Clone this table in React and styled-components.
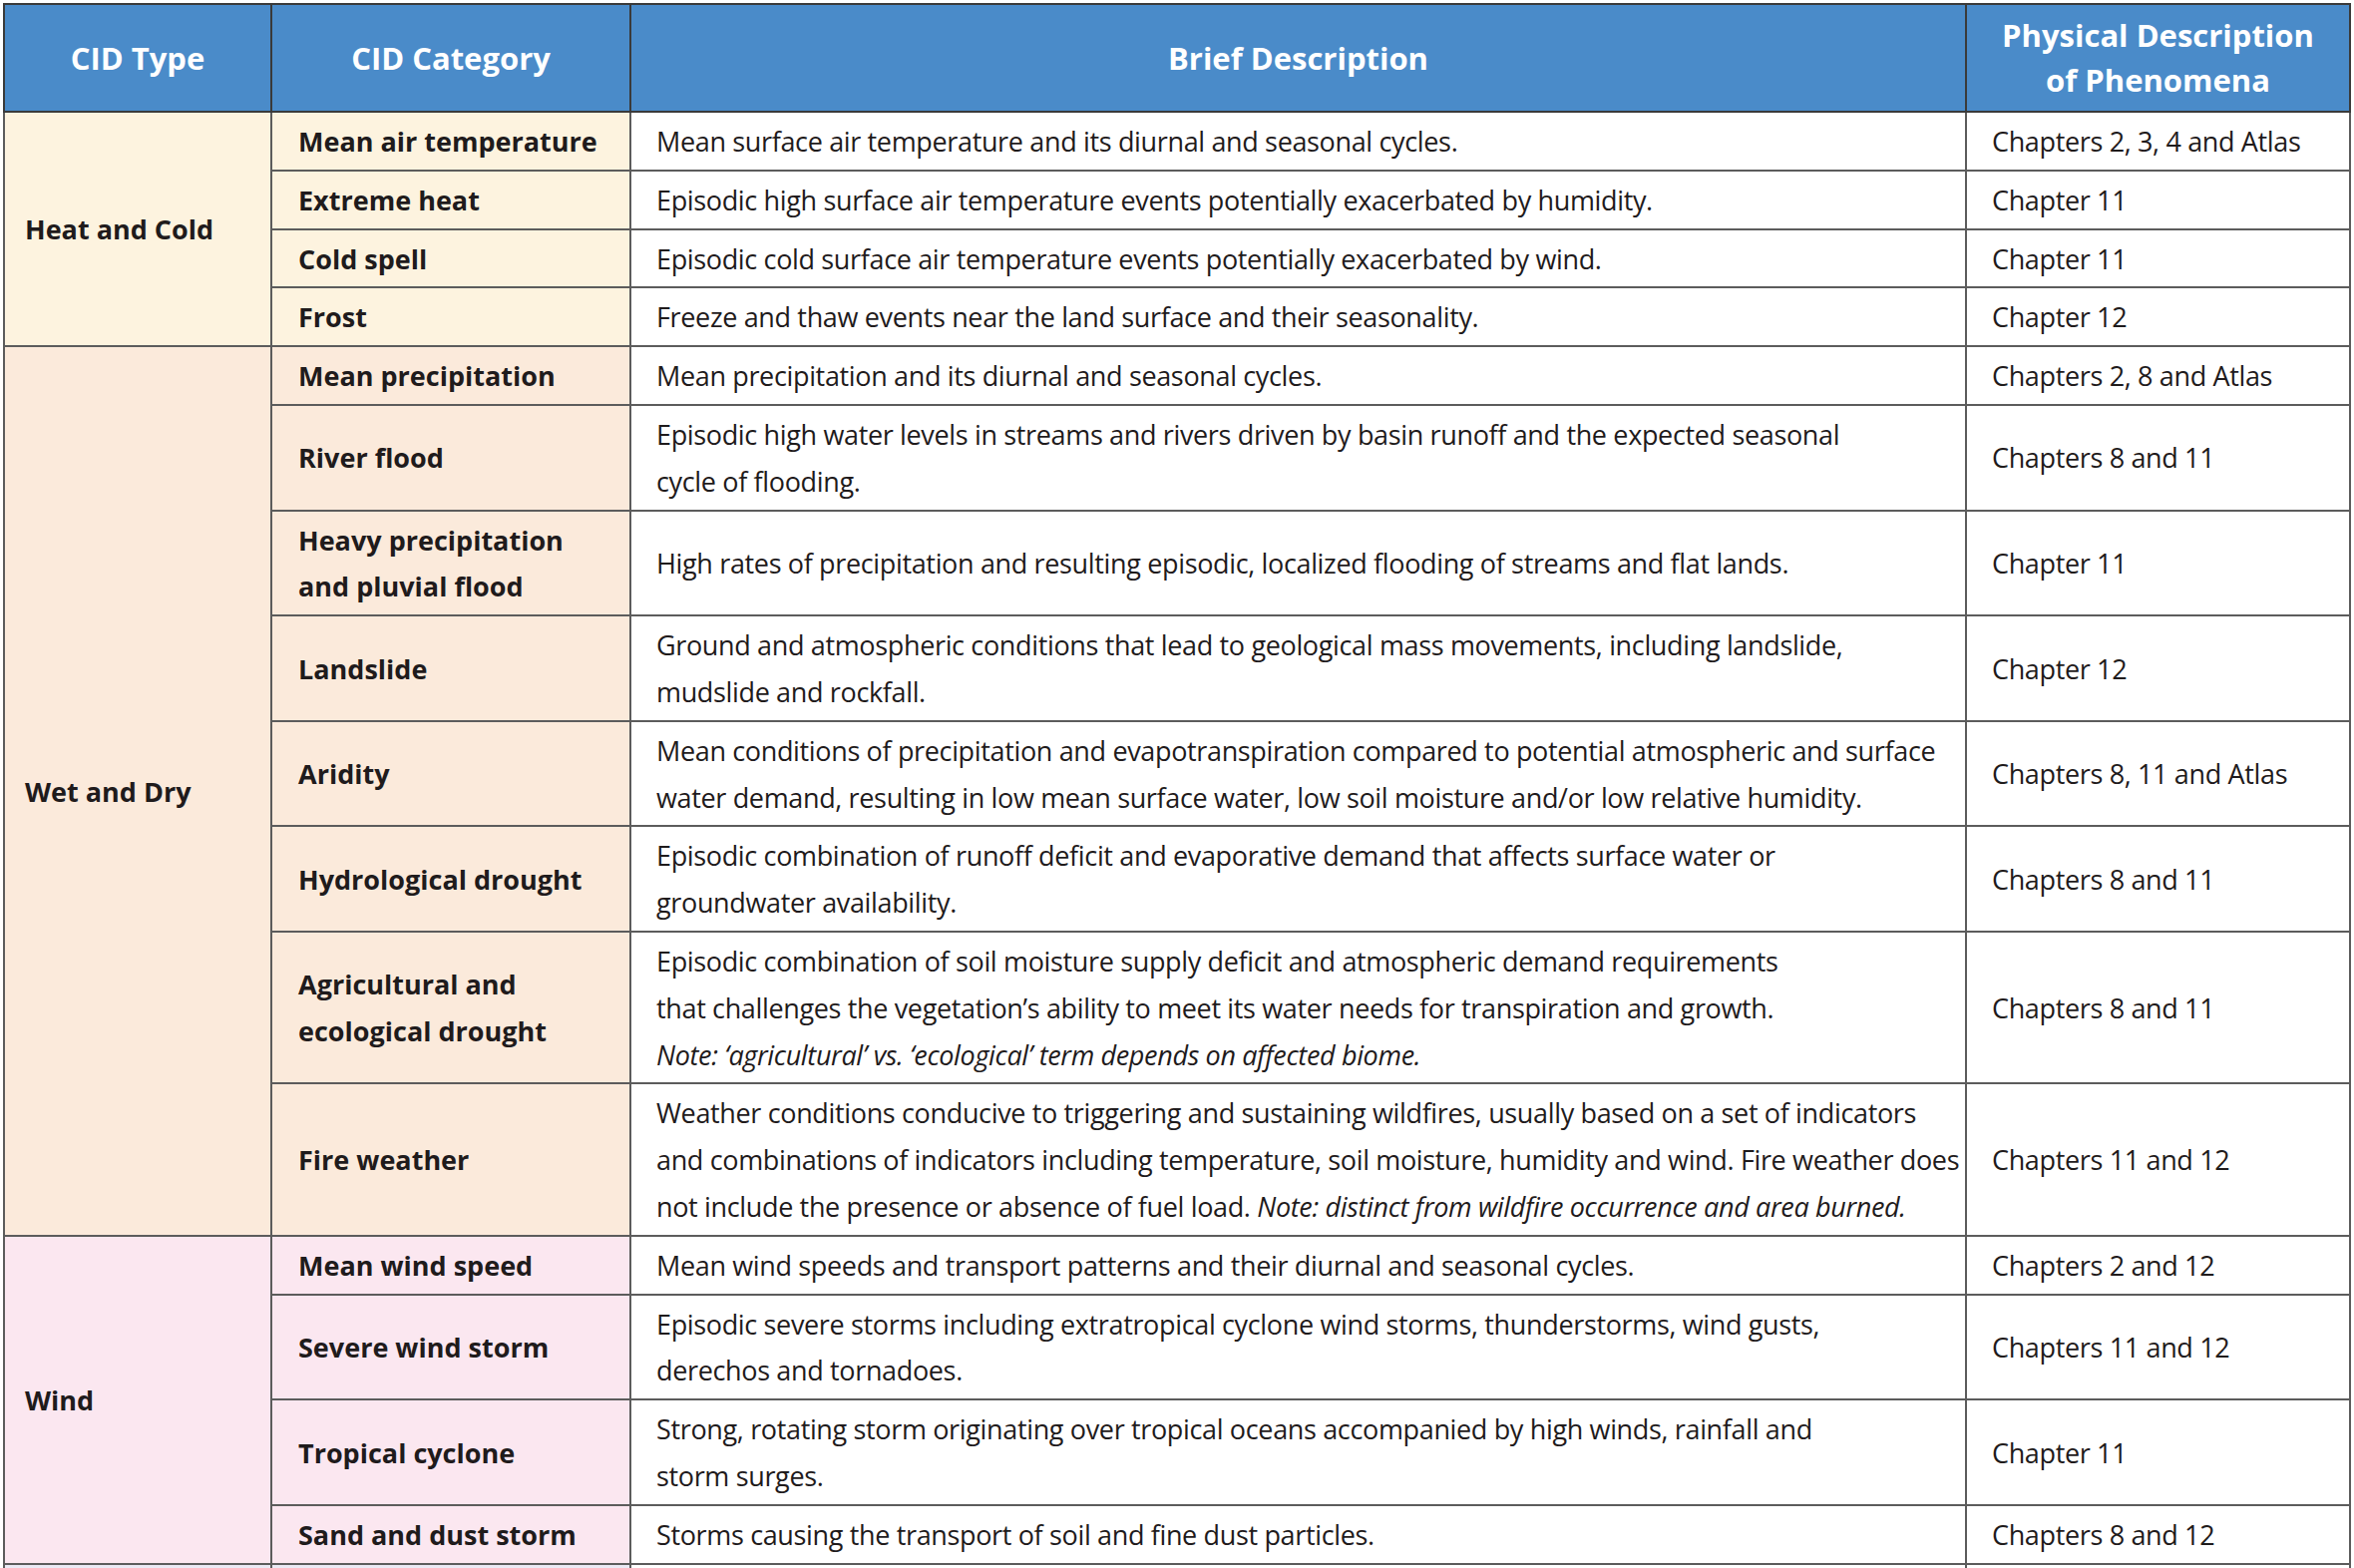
import React from "react";
import styled, { createGlobalStyle } from "styled-components";

const GlobalStyle = createGlobalStyle`
  html, body {
    margin: 0;
    padding: 0;
    background: #fff;
  }
  body {
    font-family: "Open Sans", "Noto Sans", "Liberation Sans", sans-serif;
    color: #1f1b1c;
  }
`;

const Page = styled.div`
  padding: 3px 4px 0 3px;
`;

const Table = styled.table`
  width: 2352px;
  table-layout: fixed;
  border-collapse: collapse;
  border: 2px solid #4a4a4a;
  font-size: 27px;
  letter-spacing: -0.35px;
  line-height: 46.8px;
`;

const Head = styled.th`
  background: #4a8bc9;
  color: #fff;
  font-weight: 700;
  font-size: 31px;
  letter-spacing: 0;
  line-height: 45px;
  height: 108px;
  padding: 0 10px;
  text-align: center;
  vertical-align: middle;
  border: 2px solid #3a3a3a;
  box-sizing: border-box;
`;

const Cell = styled.td`
  background: ${(p) => p.$bg || "#fff"};
  padding: 6px 12px 4px 25px;
  vertical-align: middle;
  text-align: left;
  border: 2px solid #5c5c5c;
  white-space: nowrap;
`;

const TypeCell = styled(Cell)`
  font-weight: 700;
  letter-spacing: 0;
  padding-left: 20px;
`;

const CategoryCell = styled(Cell)`
  font-weight: 700;
  letter-spacing: 0;
  padding-left: 26px;
`;

const Line = styled.div`
  white-space: nowrap;
`;

const Note = styled.i`
  font-style: italic;
`;

const groups = [
  {
    type: "Heat and Cold",
    bg: "#fdf3df",
    rows: [
      { cat: "Mean air temperature", desc: ["Mean surface air temperature and its diurnal and seasonal cycles."], ref: "Chapters 2, 3, 4 and Atlas" },
      { cat: "Extreme heat", desc: ["Episodic high surface air temperature events potentially exacerbated by humidity."], ref: "Chapter 11" },
      { cat: "Cold spell", desc: ["Episodic cold surface air temperature events potentially exacerbated by wind."], ref: "Chapter 11" },
      { cat: "Frost", desc: ["Freeze and thaw events near the land surface and their seasonality."], ref: "Chapter 12" },
    ],
  },
  {
    type: "Wet and Dry",
    bg: "#fbeadb",
    rows: [
      { cat: "Mean precipitation", desc: ["Mean precipitation and its diurnal and seasonal cycles."], ref: "Chapters 2, 8 and Atlas" },
      {
        cat: "River flood",
        desc: [
          "Episodic high water levels in streams and rivers driven by basin runoff and the expected seasonal",
          "cycle of flooding.",
        ],
        ref: "Chapters 8 and 11",
      },
      {
        cat: ["Heavy precipitation", "and pluvial flood"],
        desc: ["High rates of precipitation and resulting episodic, localized flooding of streams and flat lands."],
        ref: "Chapter 11",
      },
      {
        cat: "Landslide",
        desc: [
          "Ground and atmospheric conditions that lead to geological mass movements, including landslide,",
          "mudslide and rockfall.",
        ],
        ref: "Chapter 12",
      },
      {
        cat: "Aridity",
        desc: [
          "Mean conditions of precipitation and evapotranspiration compared to potential atmospheric and surface",
          "water demand, resulting in low mean surface water, low soil moisture and/or low relative humidity.",
        ],
        ref: "Chapters 8, 11 and Atlas",
      },
      {
        cat: "Hydrological drought",
        desc: [
          "Episodic combination of runoff deficit and evaporative demand that affects surface water or",
          "groundwater availability.",
        ],
        ref: "Chapters 8 and 11",
      },
      {
        cat: ["Agricultural and", "ecological drought"],
        desc: [
          "Episodic combination of soil moisture supply deficit and atmospheric demand requirements",
          "that challenges the vegetation\u2019s ability to meet its water needs for transpiration and growth.",
          <Note>{"Note: \u2018agricultural\u2019 vs. \u2018ecological\u2019 term depends on affected biome."}</Note>,
        ],
        ref: "Chapters 8 and 11",
      },
      {
        cat: "Fire weather",
        desc: [
          "Weather conditions conducive to triggering and sustaining wildfires, usually based on a set of indicators",
          "and combinations of indicators including temperature, soil moisture, humidity and wind. Fire weather does",
          <>not include the presence or absence of fuel load. <Note>Note: distinct from wildfire occurrence and area burned.</Note></>,
        ],
        ref: "Chapters 11 and 12",
      },
    ],
  },
  {
    type: "Wind",
    bg: "#fbe7f0",
    rows: [
      { cat: "Mean wind speed", desc: ["Mean wind speeds and transport patterns and their diurnal and seasonal cycles."], ref: "Chapters 2 and 12" },
      {
        cat: "Severe wind storm",
        desc: [
          "Episodic severe storms including extratropical cyclone wind storms, thunderstorms, wind gusts,",
          "derechos and tornadoes.",
        ],
        ref: "Chapters 11 and 12",
      },
      {
        cat: "Tropical cyclone",
        desc: [
          "Strong, rotating storm originating over tropical oceans accompanied by high winds, rainfall and",
          "storm surges.",
        ],
        ref: "Chapter 11",
      },
      { cat: "Sand and dust storm", desc: ["Storms causing the transport of soil and fine dust particles."], ref: "Chapters 8 and 12" },
    ],
  },
  {
    type: "Snow and Ice",
    bg: "#ebe9f4",
    rows: [
      { cat: ["Snow, glacier and", "ice sheet"], desc: ["Snow cover, glacier and ice sheet extent and mass."], ref: "Chapters 2, 9 and 12" },
    ],
  },
];

const lines = (value) => (Array.isArray(value) ? value : [value]);

const App = () => (
  <>
    <GlobalStyle />
    <Page>
      <Table>
        <colgroup>
          <col style={{ width: 268 }} />
          <col style={{ width: 360 }} />
          <col style={{ width: 1339 }} />
          <col style={{ width: 385 }} />
        </colgroup>
        <thead>
          <tr>
            <Head>CID Type</Head>
            <Head>CID Category</Head>
            <Head>Brief Description</Head>
            <Head>Physical Description<br />of Phenomena</Head>
          </tr>
        </thead>
        <tbody>
          {groups.map((group) =>
            group.rows.map((row, i) => (
              <tr key={group.type + i}>
                {i === 0 && (
                  <TypeCell rowSpan={group.rows.length} $bg={group.bg}>
                    {group.type}
                  </TypeCell>
                )}
                <CategoryCell $bg={group.bg}>
                  {lines(row.cat).map((l, k) => <Line key={k}>{l}</Line>)}
                </CategoryCell>
                <Cell>
                  {row.desc.map((l, k) => <Line key={k}>{l}</Line>)}
                </Cell>
                <Cell>{row.ref}</Cell>
              </tr>
            ))
          )}
        </tbody>
      </Table>
    </Page>
  </>
);

export default App;
